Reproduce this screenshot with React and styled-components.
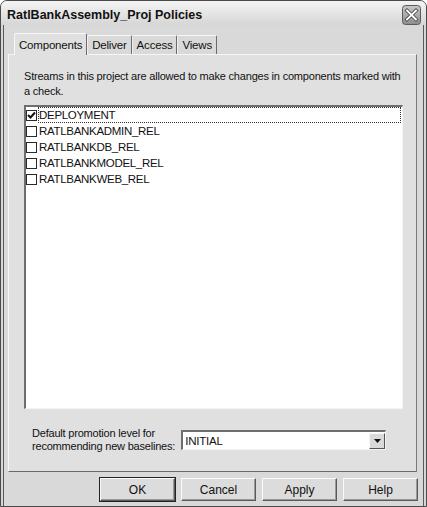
import React from "react";
import styled, { createGlobalStyle } from "styled-components";

const GlobalStyle = createGlobalStyle`
  html, body {
    margin: 0;
    padding: 0;
    background: #ffffff;
  }
  * {
    box-sizing: border-box;
  }
`;

const Window = styled.div`
  width: 427px;
  height: 507px;
  display: flex;
  flex-direction: column;
  border: 1px solid #4a4a4a;
  border-radius: 7px 7px 0 0;
  background: #d6d6d6;
  font-family: "Liberation Sans", Arial, sans-serif;
  font-size: 11px;
  letter-spacing: -0.2px;
  color: #111;
  overflow: hidden;
`;

const TitleBar = styled.div`
  height: 27px;
  display: flex;
  align-items: center;
  justify-content: space-between;
  padding: 4px 5px 0 6px;
  background: linear-gradient(#f4f4f4, #e2e2e2 60%, #d6d6d6);
`;

const Title = styled.div`
  font-size: 12.5px;
  font-weight: bold;
  letter-spacing: 0;
`;

const CloseButton = styled.div`
  width: 19px;
  height: 20px;
  display: flex;
`;

const Body = styled.div`
  flex: 1;
  display: flex;
  flex-direction: column;
  margin: 0 2px 2px;
  border: 1px solid #5a5a5a;
  border-top: none;
  padding: 7px 5px 5px 4px;
  background: #d9d9d9;
`;

const TabStrip = styled.div`
  display: flex;
  align-items: flex-end;
  padding-left: 6px;
  height: 22px;
  position: relative;
  z-index: 1;
`;

const Tab = styled.div`
  height: ${(p) => (p.$active ? "22px" : "19px")};
  padding: 0 4px;
  display: flex;
  align-items: center;
  font-size: 11.5px;
  background: ${(p) => (p.$active ? "#e0e0e0" : "#d9d9d9")};
  border-top: 1px solid #f8f8f8;
  border-left: 1px solid ${(p) => (p.$active ? "#f8f8f8" : "#f0f0f0")};
  border-right: 1px solid #6a6a6a;
  border-radius: 2px 2px 0 0;
  margin-bottom: ${(p) => (p.$active ? "-1px" : "0")};
`;

const Panel = styled.div`
  flex: 1;
  display: flex;
  flex-direction: column;
  margin-right: 1px;
  background: #e0e0e0;
  border-top: 1px solid #f6f6f6;
  border-left: 1px solid #f6f6f6;
  border-right: 1px solid #7a7a7a;
  border-bottom: 1px solid #6a6a6a;
  padding: 14px 13px 18px 15px;
`;

const Description = styled.div`
  line-height: 15px;
  white-space: nowrap;
`;

const ListBox = styled.div`
  margin-top: 6px;
  height: 304px;
  background: #fff;
  border-top: 2px solid #6e6e6e;
  border-left: 2px solid #6e6e6e;
  border-right: 1px solid #f4f4f4;
  border-bottom: 1px solid #f4f4f4;
  display: flex;
  flex-direction: column;
`;

const Row = styled.div`
  height: 16px;
  display: flex;
  align-items: center;
  gap: 1px;
  font-size: 11.5px;
  letter-spacing: -0.3px;
`;

const Box = styled.div`
  width: 11px;
  height: 11px;
  border: 1px solid #2a2a2a;
  background: #fff;
  display: flex;
  align-items: center;
  justify-content: center;
  flex-shrink: 0;
`;

const RowLabel = styled.div`
  flex: ${(p) => (p.$focused ? 1 : "none")};
  height: 16px;
  line-height: 14px;
  border: 1px ${(p) => (p.$focused ? "dotted #333" : "solid transparent")};
  margin-right: 1px;
`;

const PromotionRow = styled.div`
  margin-top: 18px;
  display: flex;
  align-items: center;
  padding-left: 8px;
  gap: 6px;
`;

const PromotionLabel = styled.div`
  line-height: 13px;
  white-space: nowrap;
`;

const Combo = styled.div`
  width: 205px;
  height: 20px;
  background: #fff;
  border-top: 2px solid #6e6e6e;
  border-left: 2px solid #6e6e6e;
  border-right: 1px solid #f4f4f4;
  border-bottom: 1px solid #f4f4f4;
  display: flex;
  align-items: center;
  justify-content: space-between;
  padding-left: 2px;
  font-size: 11.5px;
`;

const ComboArrow = styled.div`
  width: 16px;
  height: 16px;
  background: #dadada;
  border-top: 1px solid #f8f8f8;
  border-left: 1px solid #f8f8f8;
  border-right: 1px solid #555;
  border-bottom: 1px solid #555;
  display: flex;
  align-items: center;
  justify-content: center;
`;

const ButtonRow = styled.div`
  display: flex;
  justify-content: flex-end;
  gap: 6px;
  padding: 6px 0 0;
`;

const Button = styled.div`
  width: 75px;
  height: 23px;
  display: flex;
  align-items: center;
  justify-content: center;
  font-size: 12px;
  letter-spacing: 0;
  background: #dcdcdc;
  border-top: 1px solid #fafafa;
  border-left: 1px solid #fafafa;
  border-right: 1px solid #5a5a5a;
  border-bottom: 1px solid #5a5a5a;
  box-shadow: ${(p) =>
    p.$default ? "0 0 0 1px #222, inset -1px -1px 0 #999" : "inset -1px -1px 0 #9a9a9a"};
`;

const items = [
  { name: "DEPLOYMENT", checked: true },
  { name: "RATLBANKADMIN_REL" },
  { name: "RATLBANKDB_REL" },
  { name: "RATLBANKMODEL_REL" },
  { name: "RATLBANKWEB_REL" },
];

function App() {
  return (
    <>
      <GlobalStyle />
      <Window>
        <TitleBar>
          <Title>RatlBankAssembly_Proj Policies</Title>
          <CloseButton>
            <svg width="19" height="20" viewBox="0 0 19 20">
              <defs>
                <linearGradient id="cb" x1="0" y1="0" x2="0" y2="1">
                  <stop offset="0" stopColor="#c8c8c8" />
                  <stop offset="1" stopColor="#8c8c8c" />
                </linearGradient>
              </defs>
              <rect x="0.5" y="0.5" width="18" height="19" rx="3" fill="url(#cb)" stroke="#5a5a5a" />
              <path d="M5 5.5 L14 14.5 M14 5.5 L5 14.5" stroke="#4a4a4a" strokeWidth="3.6" strokeLinecap="square" />
              <path d="M5 5.5 L14 14.5 M14 5.5 L5 14.5" stroke="#ffffff" strokeWidth="1.8" strokeLinecap="square" />
            </svg>
          </CloseButton>
        </TitleBar>
        <Body>
          <TabStrip>
            <Tab $active>Components</Tab>
            <Tab>Deliver</Tab>
            <Tab>Access</Tab>
            <Tab>Views</Tab>
          </TabStrip>
          <Panel>
            <Description>
              Streams in this project are allowed to make changes in components marked with
              <br />
              a check.
            </Description>
            <ListBox>
              {items.map((item, index) => (
                <Row key={index}>
                  <Box>
                    {item.checked && (
                      <svg width="9" height="9" viewBox="0 0 9 9">
                        <path d="M1 4 L3.5 6.5 L8 1.5" fill="none" stroke="#111" strokeWidth="2" />
                      </svg>
                    )}
                  </Box>
                  <RowLabel $focused={index === 0}>{item.name}</RowLabel>
                </Row>
              ))}
            </ListBox>
            <PromotionRow>
              <PromotionLabel>
                Default promotion level for
                <br />
                recommending new baselines:
              </PromotionLabel>
              <Combo>
                INITIAL
                <ComboArrow>
                  <svg width="7" height="4" viewBox="0 0 7 4">
                    <path d="M0 0 H7 L3.5 4 Z" fill="#111" />
                  </svg>
                </ComboArrow>
              </Combo>
            </PromotionRow>
          </Panel>
          <ButtonRow>
            <Button $default>OK</Button>
            <Button>Cancel</Button>
            <Button>Apply</Button>
            <Button>Help</Button>
          </ButtonRow>
        </Body>
      </Window>
    </>
  );
}

export default App;
